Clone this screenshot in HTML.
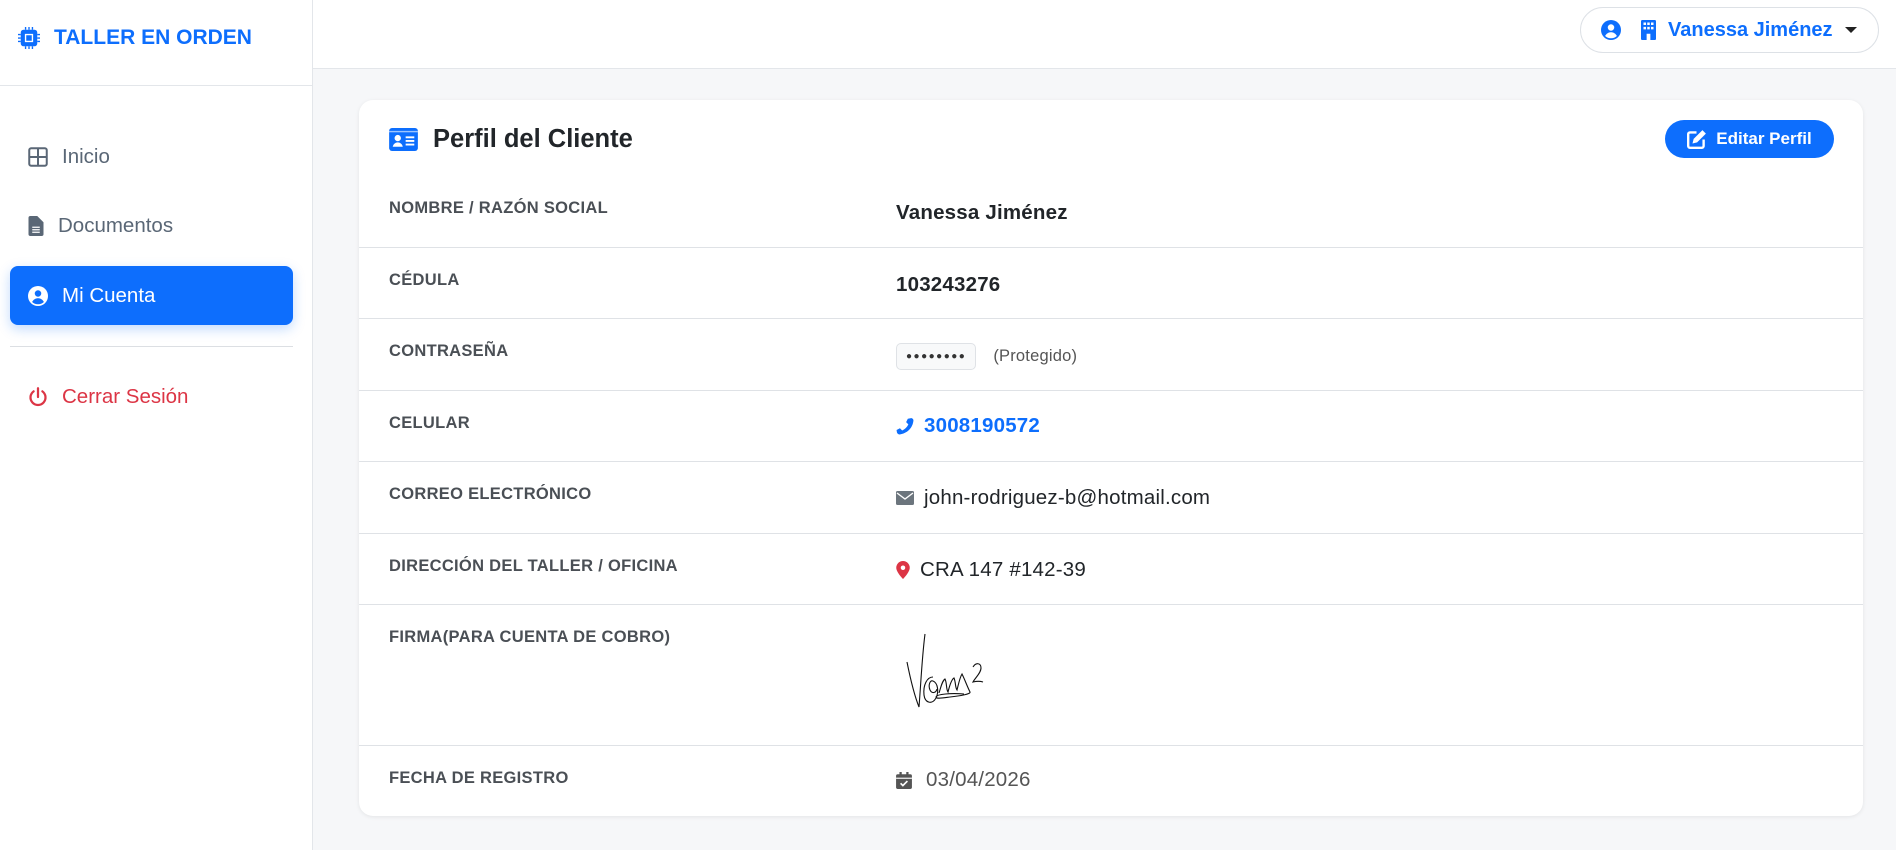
<!DOCTYPE html>
<html><head><meta charset="utf-8"><style>
*{box-sizing:border-box;margin:0;padding:0}
body{width:1896px;height:850px;overflow:hidden;font-family:"Liberation Sans",sans-serif;background:#f6f7f9;position:relative;color:#212529}
.side{position:absolute;left:0;top:0;width:313px;height:850px;background:#fff;border-right:1px solid #e3e6ea}
.logo{position:absolute;left:18px;top:26px;display:flex;align-items:center;color:#0d6efd;font-weight:bold;font-size:21px}
.sidehr{position:absolute;left:0;top:85px;width:313px;border-top:1px solid #e3e6ea}
.nav{position:absolute;left:10px;width:283px;height:59px;display:flex;align-items:center;padding-left:18px;font-size:20.5px;color:#5a6776}
.nav svg{margin-right:14px}
.active{background:#0d6efd;color:#fff;border-radius:8px;box-shadow:0 4px 12px rgba(13,110,253,.25)}
.top{position:absolute;left:313px;top:0;right:0;height:69px;background:#fff;border-bottom:1px solid #e3e6ea}
.pill{position:absolute;left:1580px;top:7px;width:299px;height:46px;border:1px solid #dde1e6;border-radius:23px;display:flex;align-items:center;padding-left:20px;color:#0d6efd;font-weight:bold;font-size:20px}
.card{position:absolute;left:359px;top:100px;width:1504px;height:716px;background:#fff;border-radius:14px;box-shadow:0 1px 4px rgba(0,0,0,.08)}
.title{position:absolute;left:30px;top:25px;display:flex;align-items:center;font-size:25.5px;font-weight:bold;color:#212529}
.btn{position:absolute;left:1306px;top:20px;width:169px;height:38px;border-radius:19px;background:#0d6efd;color:#fff;font-weight:bold;font-size:17px;display:flex;align-items:center;justify-content:center}
.row{position:absolute;left:0;width:1504px;border-bottom:1px solid #dfe2e6}
.lab{position:absolute;left:30px;top:23px;font-size:16.5px;letter-spacing:.3px;font-weight:bold;color:#4a4f55}
.val{position:absolute;left:537px;top:22px;font-size:20.5px;letter-spacing:.2px;display:flex;align-items:center}
</style></head><body>
<div class="side">
 <div class="logo"><svg width="22" height="22" viewBox="0 0 16 16" fill="#0d6efd" style="margin-right:14px"><path d="M5 0h1v2H5zM7.5 0h1v2h-1zM10 0h1v2h-1zM5 14h1v2H5zM7.5 14h1v2h-1zM10 14h1v2h-1zM0 5h2v1H0zM0 7.5h2v1H0zM0 10h2v1H0zM14 5h2v1h-2zM14 7.5h2v1h-2zM14 10h2v1h-2z"/><rect x="2" y="2" width="12" height="12" rx="2"/><rect x="5" y="5" width="6" height="6" fill="#fff"/><rect x="6" y="6" width="4" height="4"/></svg>TALLER EN ORDEN</div>
 <div class="sidehr"></div>
 <div class="nav" style="top:127px"><svg width="20" height="20" viewBox="0 0 16 16" fill="none" stroke="#5a6776" stroke-width="1.6"><rect x="1" y="1" width="14" height="14" rx="1.5"/><path d="M8 1v14M1 8h14"/></svg>Inicio</div>
 <div class="nav" style="top:196px"><svg width="16" height="20" viewBox="0 0 12 16" fill="#5a6776"><path d="M0 1.5A1.5 1.5 0 0 1 1.5 0H7l5 5v9.5a1.5 1.5 0 0 1-1.5 1.5h-9A1.5 1.5 0 0 1 0 14.5z"/><path d="M3 9h6M3 11h6M3 13h6" stroke="#fff" stroke-width="1"/></svg>Documentos</div>
 <div class="nav active" style="top:266px"><svg width="20" height="20" viewBox="0 0 16 16"><circle cx="8" cy="8" r="8" fill="#fff"/><circle cx="8" cy="6" r="2.6" fill="#0d6efd"/><path d="M3.3 12.8c1-2 2.7-3 4.7-3s3.7 1 4.7 3A7 7 0 0 1 3.3 12.8z" fill="#0d6efd"/></svg>Mi Cuenta</div>
 <div style="position:absolute;left:10px;top:346px;width:283px;border-top:1px solid #dcdfe3"></div>
 <div class="nav" style="top:367px;color:#dc3545"><svg width="20" height="20" viewBox="0 0 16 16" fill="none" stroke="#dc3545" stroke-width="1.8" stroke-linecap="round"><path d="M8 1v7"/><path d="M4.5 3.5a6 6 0 1 0 7 0"/></svg>Cerrar Sesión</div>
</div>
<div class="top"></div>
<div class="pill"><svg width="20" height="20" viewBox="0 0 16 16"><circle cx="8" cy="8" r="8" fill="#0d6efd"/><circle cx="8" cy="6" r="2.6" fill="#fff"/><path d="M3.3 12.8c1-2 2.7-3 4.7-3s3.7 1 4.7 3A7 7 0 0 1 3.3 12.8z" fill="#fff"/></svg><svg width="15" height="20" viewBox="0 0 12 16" style="margin-left:20px;margin-right:12px"><rect width="12" height="16" rx="1" fill="#0d6efd"/><g fill="#fff"><rect x="2" y="2" width="2" height="2"/><rect x="5" y="2" width="2" height="2"/><rect x="8" y="2" width="2" height="2"/><rect x="2" y="5.5" width="2" height="2"/><rect x="5" y="5.5" width="2" height="2"/><rect x="8" y="5.5" width="2" height="2"/><rect x="4.5" y="11" width="3" height="5"/></g></svg>Vanessa Jiménez<span style="margin-left:12px;width:0;height:0;border-left:6px solid transparent;border-right:6px solid transparent;border-top:6px solid #222"></span></div>
<div class="card">
 <div class="title"><svg width="29" height="23" viewBox="0 0 20 16"><rect width="20" height="16" rx="2" fill="#0d6efd"/><rect x="0" y="2" width="20" height="1" fill="#fff" opacity=".6"/><circle cx="6" cy="7" r="2.2" fill="#fff"/><path d="M2.5 13c.5-2 2-3 3.5-3s3 1 3.5 3z" fill="#fff"/><path d="M11.5 6.5h6M11.5 9h6M11.5 11.5h6" stroke="#fff" stroke-width="1.3"/></svg><span style="margin-left:15px">Perfil del Cliente</span></div>
 <div class="btn"><svg width="19" height="19" viewBox="0 0 16 16" fill="none" stroke="#fff" stroke-width="2" style="margin-right:10px"><path d="M8 2H2.5A1.5 1.5 0 0 0 1 3.5v10A1.5 1.5 0 0 0 2.5 15h10a1.5 1.5 0 0 0 1.5-1.5V8"/><path d="M13 1.5l1.5 1.5L8 9.5 6 10l.5-2z" fill="#fff"/></svg>Editar Perfil</div>

 <div class="row" style="top:76px;height:72px"><div class="lab">NOMBRE / RAZÓN SOCIAL</div><div class="val" style="font-weight:bold;top:25px">Vanessa Jiménez</div></div>
 <div class="row" style="top:148px;height:71px"><div class="lab">CÉDULA</div><div class="val" style="font-weight:bold;top:25px">103243276</div></div>
 <div class="row" style="top:219px;height:72px"><div class="lab">CONTRASEÑA</div><div class="val" style="top:24px"><span style="border:1px solid #dfe2e6;background:#f8f9fa;border-radius:5px;padding:0 9px;font-size:10px;letter-spacing:1.5px;height:27px;display:inline-flex;align-items:center;color:#333">●●●●●●●●</span><span style="margin-left:17px;font-size:16.5px;color:#555">(Protegido)</span></div></div>
 <div class="row" style="top:291px;height:71px"><div class="lab">CELULAR</div><div class="val" style="color:#0d6efd;font-weight:bold;top:23px"><svg width="18" height="18" viewBox="0 0 16 16" fill="#0d6efd" style="margin-right:10px"><path d="M15.5 11.5l-3-1.5-2 2c-2.5-1.2-4.3-3-5.5-5.5l2-2L5.5 1.5 2.5 1C1.5 1 .5 2 .5 3c.5 6.5 5.5 11.8 12.5 12.5 1 0 2-1 2.2-2z" transform="scale(-1,1) translate(-16,0)"/></svg>3008190572</div></div>
 <div class="row" style="top:362px;height:72px"><div class="lab">CORREO ELECTRÓNICO</div><div class="val" style="top:24px"><svg width="18" height="14" viewBox="0 0 18 14" style="margin-right:10px"><rect width="18" height="14" rx="1.5" fill="#6c757d"/><path d="M1 2l8 6 8-6" stroke="#fff" stroke-width="1.4" fill="none"/></svg>john-rodriguez-b@hotmail.com</div></div>
 <div class="row" style="top:434px;height:71px"><div class="lab">DIRECCIÓN DEL TALLER / OFICINA</div><div class="val" style="top:24px"><svg width="14" height="18" viewBox="0 0 12 16" style="margin-right:10px"><path d="M6 0a6 6 0 0 1 6 6c0 4-6 10-6 10S0 10 0 6a6 6 0 0 1 6-6z" fill="#dc3545"/><circle cx="6" cy="6" r="2" fill="#fff"/></svg>CRA 147 #142-39</div></div>
 <div class="row" style="top:505px;height:141px"><div class="lab">FIRMA(PARA CUENTA DE COBRO)</div>
  <svg style="position:absolute;left:540px;top:22px" width="110" height="90" viewBox="0 0 110 90" fill="none" stroke="#111" stroke-width="1.1"><path d="M8 35c4 20 8 35 12 45 2-25 3-50 6-73"/><path d="M34 50c-6 0-10 8-9 18 1 8 8 10 12 3 3-6 2-15-3-17-3-1-5 4-3 9 2 4 6 3 7-1"/><path d="M40 66c2-6 3-12 6-14 2 4 1 10 3 13 2-8 4-13 6-14 2 5 1 9 3 12 2-8 3-13 5-16 3 6 5 12 8 18 1 2-10 4-20 5-8 1-14 2-14 0 1-3 15-4 28-3"/><path d="M74 40c3-5 8-4 8 1 0 5-6 10-8 14 4-1 7-1 10 0"/></svg>
 </div>
 <div class="row" style="top:646px;height:70px;border-bottom:none"><div class="lab">FECHA DE REGISTRO</div><div class="val" style="top:22px;color:#555"><svg width="16" height="17" viewBox="0 0 14 15" style="margin-right:14px"><rect x="0" y="2" width="14" height="13" rx="1.5" fill="#555"/><rect x="3" y="0" width="2" height="4" fill="#555"/><rect x="9" y="0" width="2" height="4" fill="#555"/><rect x="0" y="5" width="14" height="1" fill="#fff"/><path d="M4 10l2 2 4-4" stroke="#fff" stroke-width="1.5" fill="none"/></svg>03/04/2026</div></div>
</div>
</body></html>
